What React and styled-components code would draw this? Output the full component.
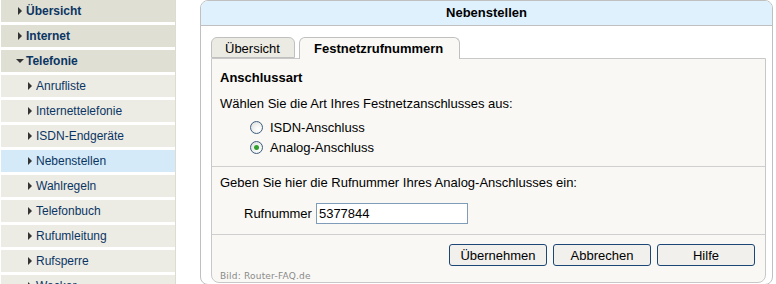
import React from 'react'
import styled, { createGlobalStyle } from 'styled-components'

const GlobalStyle = createGlobalStyle`
  html, body {
    margin: 0;
    padding: 0;
    background: #fff;
  }
  body {
    font-family: "Liberation Sans", Arial, sans-serif;
    overflow: hidden;
  }
`

const menu = [
  { label: 'Übersicht', level: 0 },
  { label: 'Internet', level: 0 },
  { label: 'Telefonie', level: 0, open: true },
  { label: 'Anrufliste', level: 1 },
  { label: 'Internettelefonie', level: 1 },
  { label: 'ISDN-Endgeräte', level: 1 },
  { label: 'Nebenstellen', level: 1, active: true },
  { label: 'Wahlregeln', level: 1 },
  { label: 'Telefonbuch', level: 1 },
  { label: 'Rufumleitung', level: 1 },
  { label: 'Rufsperre', level: 1 },
  { label: 'Wecker', level: 1 },
]

const Page = () => (
  <Layout>
    <GlobalStyle />
    <Sidebar>
      {menu.map((item) => (
        <NavRow key={item.label} $level={item.level} $active={item.active}>
          <ArrowBox>{item.open ? <DownArrow /> : <RightArrow />}</ArrowBox>
          <NavLabel $level={item.level}>{item.label}</NavLabel>
        </NavRow>
      ))}
    </Sidebar>

    <Panel>
      <PanelHeader>Nebenstellen</PanelHeader>
      <TabBar>
        <Tab $w={84}>Übersicht</Tab>
        <Tab $w={161} $active>Festnetzrufnummern</Tab>
      </TabBar>
      <TabBody>
        <Section>
          <SectionTitle>Anschlussart</SectionTitle>
          <Line $top={10}>Wählen Sie die Art Ihres Festnetzanschlusses aus:</Line>
          <RadioList>
            <RadioRow>
              <Radio />
              <span>ISDN-Anschluss</span>
            </RadioRow>
            <RadioRow>
              <Radio $checked />
              <span>Analog-Anschluss</span>
            </RadioRow>
          </RadioList>
        </Section>
        <Section $pt={8} $pb={10}>
          <Line>Geben Sie hier die Rufnummer Ihres Analog-Anschlusses ein:</Line>
          <FieldRow>
            <span>Rufnummer</span>
            <Input defaultValue="5377844" />
          </FieldRow>
        </Section>
        <ButtonBar>
          <Button>Übernehmen</Button>
          <Button>Abbrechen</Button>
          <Button>Hilfe</Button>
        </ButtonBar>
        <Credit>Bild: Router-FAQ.de</Credit>
      </TabBody>
    </Panel>
  </Layout>
)

const Layout = styled.div`
  display: flex;
  align-items: flex-start;
  width: 776px;
  height: 284px;
  overflow: hidden;
`

const Sidebar = styled.nav`
  width: 174px;
  height: 284px;
  padding-left: 1px;
  border-right: 1px solid #dcdcd0;
  display: flex;
  flex-direction: column;
  gap: 3px;
  flex-shrink: 0;
`

const NavRow = styled.div`
  height: 22px;
  flex-shrink: 0;
  display: flex;
  align-items: center;
  padding-left: ${({ $level }) => ($level ? 25 : 15)}px;
  background: ${({ $level, $active }) =>
    $active ? '#d4eaf8' : $level ? '#ecebe4' : '#dfdfd3'};
`

const ArrowBox = styled.span`
  width: 8px;
  height: 8px;
  display: flex;
  align-items: center;
  justify-content: center;
  margin-right: 2px;
`

const RightArrow = styled.span`
  width: 0;
  height: 0;
  border-top: 4px solid transparent;
  border-bottom: 4px solid transparent;
  border-left: 4px solid #333;
`

const DownArrow = styled.span`
  width: 0;
  height: 0;
  border-left: 4px solid transparent;
  border-right: 4px solid transparent;
  border-top: 4px solid #333;
`

const NavLabel = styled.span`
  font-size: 12px;
  line-height: 22px;
  color: #0b3563;
  font-weight: ${({ $level }) => ($level ? 400 : 700)};
`

const Panel = styled.section`
  margin-left: 24px;
  width: 555px;
  height: 282px;
  flex-shrink: 0;
  border: 1px solid #c0c0c0;
  border-radius: 8px;
  background: #fff;
  display: flex;
  flex-direction: column;
  overflow: hidden;
  padding: 0 6px 1px 10px;
  box-sizing: content-box;
`

const PanelHeader = styled.div`
  margin: 0 -6px 0 -10px;
  height: 24px;
  line-height: 24px;
  background: #dff1fc;
  border-bottom: 1px solid #c0c0c0;
  text-align: center;
  font-size: 13px;
  font-weight: 700;
  color: #000;
`

const TabBar = styled.div`
  display: flex;
  gap: 4px;
  margin-top: 11px;
  position: relative;
  z-index: 1;
`

const Tab = styled.div`
  width: ${({ $w }) => $w}px;
  box-sizing: border-box;
  height: ${({ $active }) => ($active ? 22 : 21)}px;
  line-height: 21px;
  padding-left: ${({ $active }) => ($active ? 14 : 13)}px;
  font-size: 13px;
  font-weight: ${({ $active }) => ($active ? 700 : 400)};
  color: #000;
  background: ${({ $active }) => ($active ? '#f9f8f4' : '#ebebe3')};
  border: 1px solid #c0c0c0;
  border-bottom: ${({ $active }) => ($active ? 'none' : '1px solid #c0c0c0')};
  border-radius: 6px 6px 0 0;
`

const TabBody = styled.div`
  flex: 1;
  margin-top: -1px;
  background: #f9f8f4;
  border: 1px solid #c8c8c8;
  border-radius: 0 0 8px 8px;
  display: flex;
  flex-direction: column;
  font-size: 13px;
  color: #000;
`

const Section = styled.div`
  padding: ${({ $pt }) => $pt ?? 11}px 8px ${({ $pb }) => $pb ?? 9}px 8px;
  border-bottom: 1px solid #cfcfcf;
`

const SectionTitle = styled.div`
  font-weight: 700;
  line-height: 16px;
`

const Line = styled.div`
  line-height: 16px;
  margin-top: ${({ $top }) => $top ?? 0}px;
`

const RadioList = styled.div`
  margin-top: 5px;
  padding-left: 30px;
`

const RadioRow = styled.div`
  display: flex;
  align-items: center;
  height: 20px;
  gap: 7px;
`

const Radio = styled.span`
  width: 11px;
  height: 11px;
  border-radius: 50%;
  border: 1px solid #3e5d80;
  background: radial-gradient(circle at 65% 65%, #fff 0%, #eef0ee 50%, #d6d8d4 100%);
  position: relative;
  &::after {
    content: '';
    display: ${({ $checked }) => ($checked ? 'block' : 'none')};
    position: absolute;
    left: 3px;
    top: 3px;
    width: 5px;
    height: 5px;
    border-radius: 50%;
    background: #2fa02f;
  }
`

const FieldRow = styled.div`
  display: flex;
  align-items: center;
  gap: 4px;
  margin-top: 12px;
  padding-left: 24px;
`

const Input = styled.input`
  width: 146px;
  height: 19px;
  box-sizing: content-box;
  padding: 0 2px;
  border: 1px solid #7f9db9;
  background: #fff;
  font-family: "Liberation Sans", Arial, sans-serif;
  font-size: 13px;
  color: #000;
  outline: none;
`

const ButtonBar = styled.div`
  display: flex;
  justify-content: flex-end;
  gap: 6px;
  padding: 9px 10px 0 0;
`

const Button = styled.button`
  width: 98px;
  height: 22px;
  border: 1px solid #1c4675;
  border-radius: 3px;
  background: #f1f0ec;
  font-family: "Liberation Sans", Arial, sans-serif;
  font-size: 13px;
  color: #000;
  padding: 0;
`

const Credit = styled.div`
  margin: 5px 0 0 8px;
  font-family: "DejaVu Sans", Verdana, sans-serif;
  font-size: 9px;
  letter-spacing: 0.2px;
  line-height: 11px;
  color: #8a8a8a;
`

export default Page
